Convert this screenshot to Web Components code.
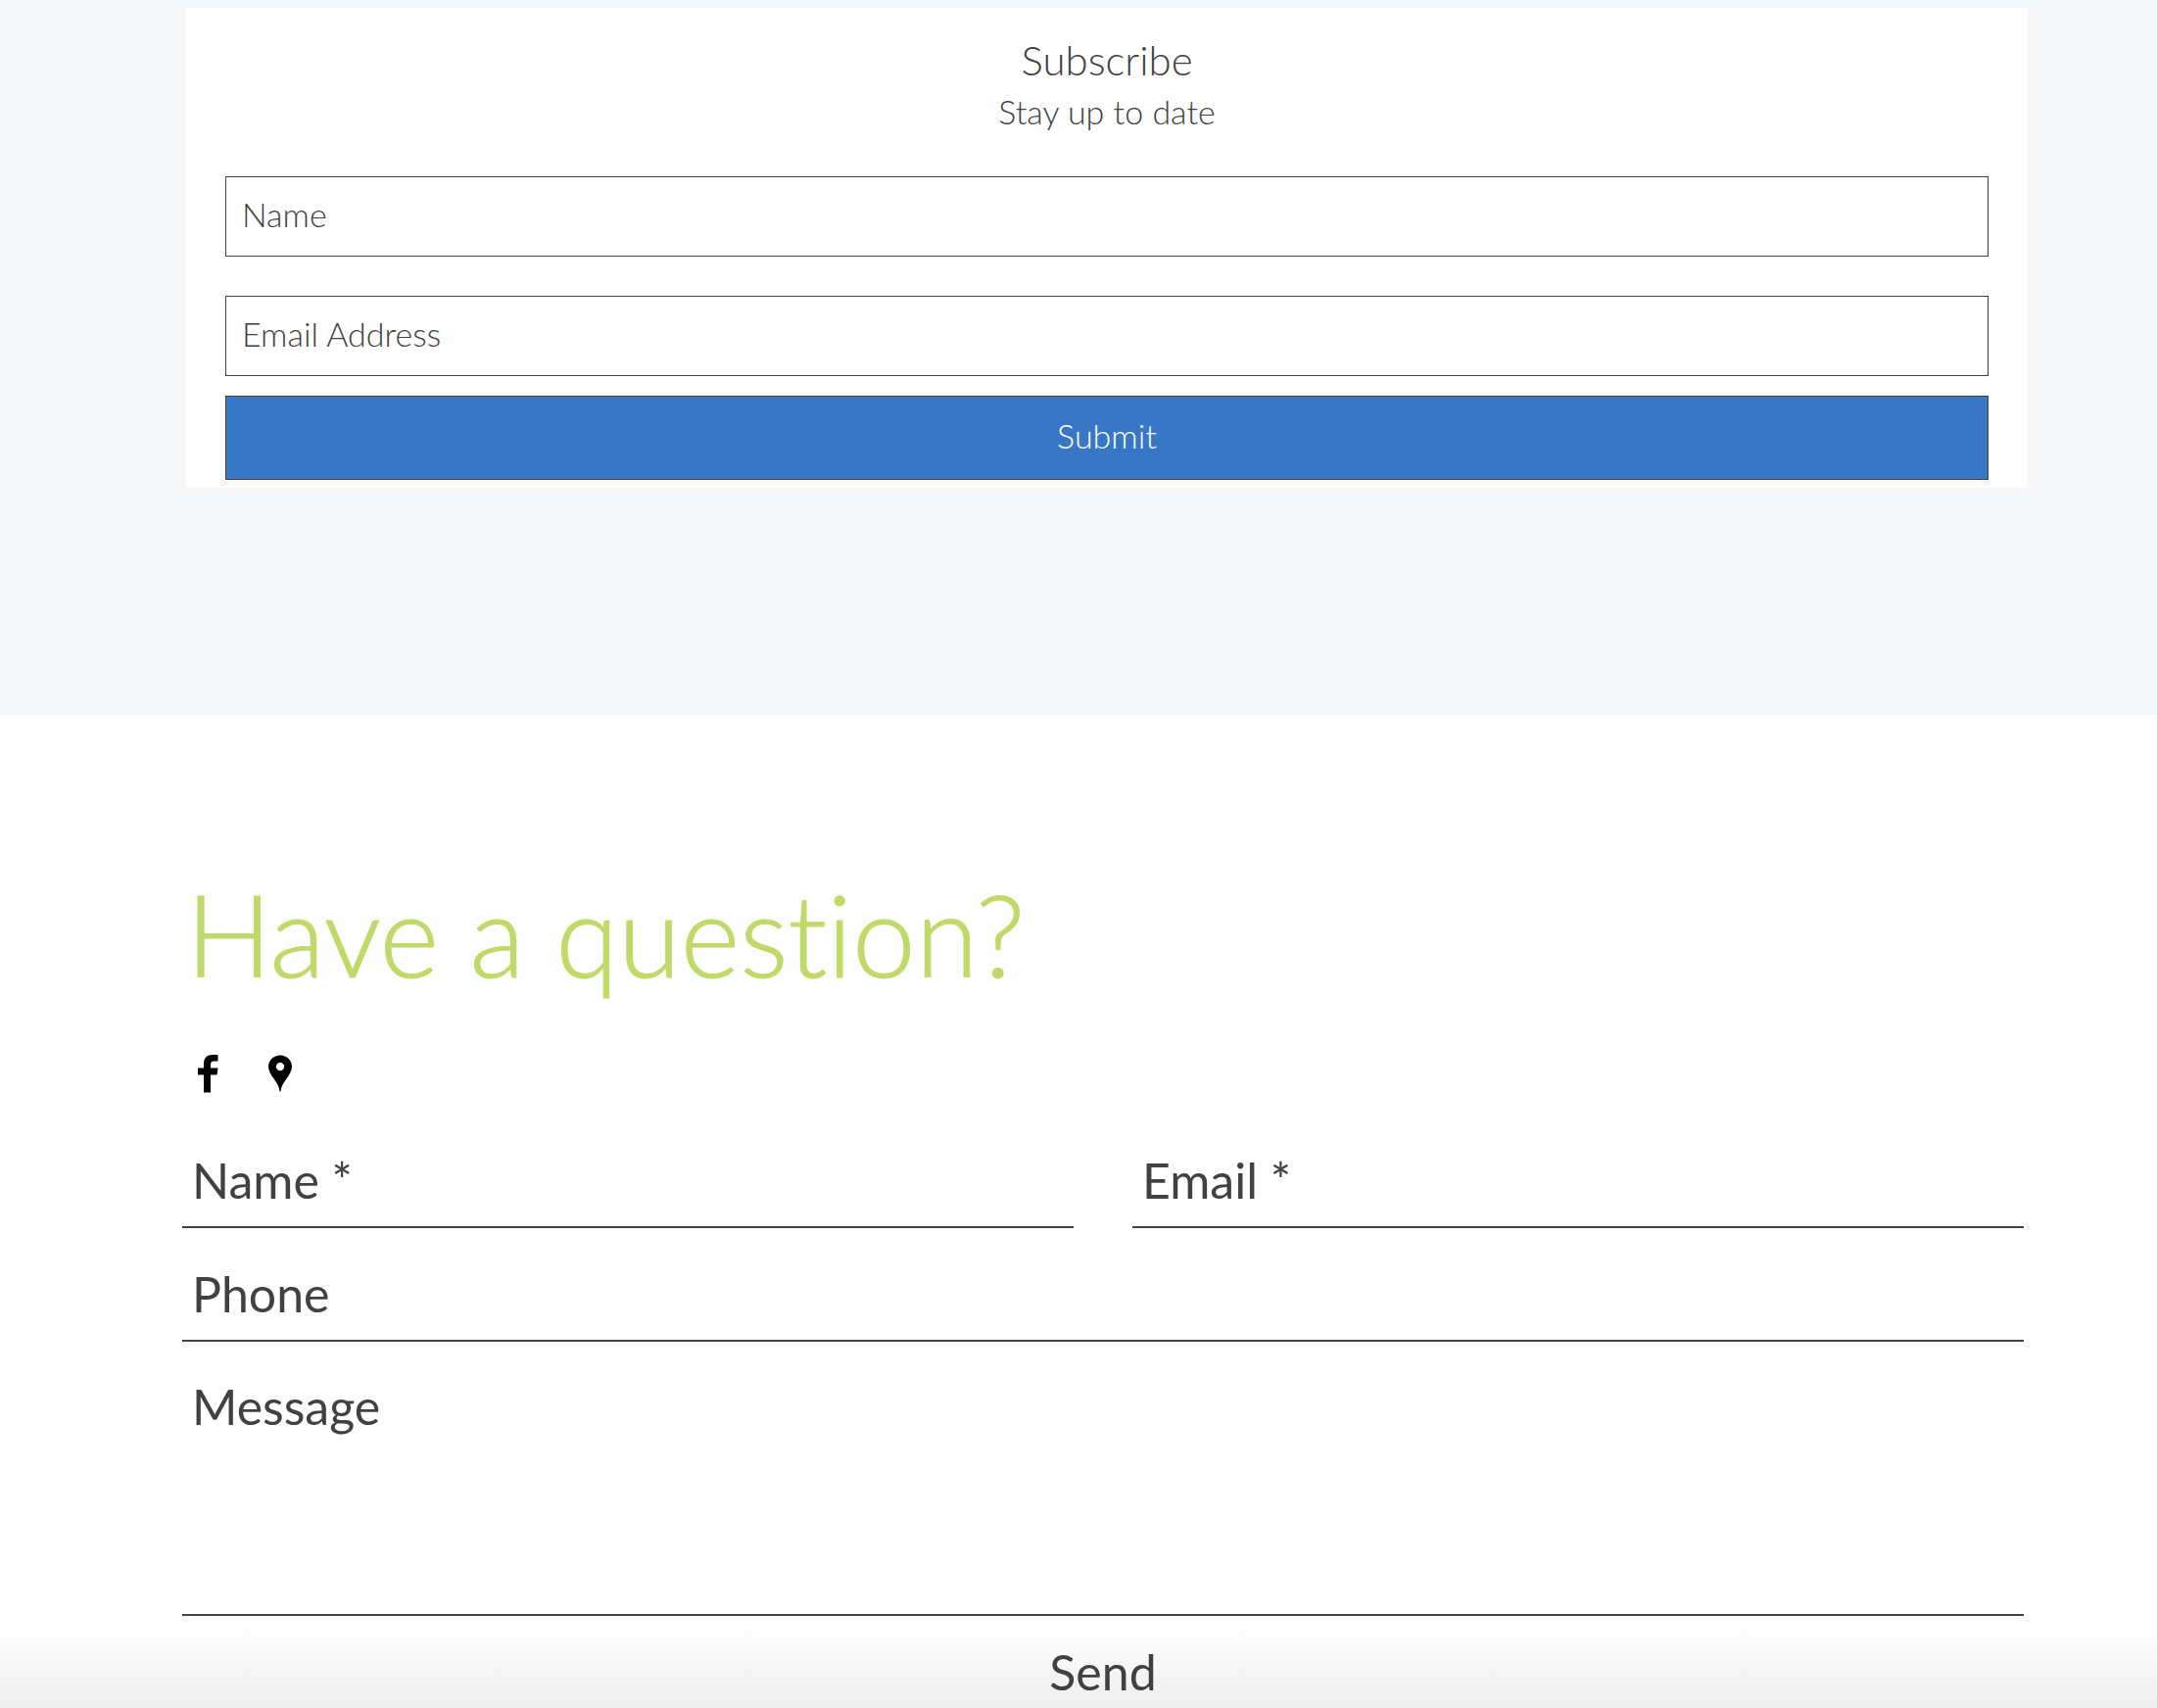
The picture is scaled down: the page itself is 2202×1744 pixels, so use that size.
<!DOCTYPE html>
<html lang="en">
<head>
<meta charset="utf-8">
<title>Subscribe and contact</title>
<style>
  html, body { margin: 0; min-height: 100%; }
  html { background: #fefefe; }
  body {
    --ink: #414141;
    --small: 34px;
    --medium: 42px;
    --large: 50px;
    --display: 116px;
    display: flex;
    flex-direction: column;
    min-height: 100vh;
    color: var(--ink);
    font-family: Lato, "Open Sans", sans-serif;
    font-weight: 300;
    font-variant-ligatures: none;
  }
</style>
</head>
<body>
<page-band>
  <subscribe-card>
    <span slot="title">Subscribe</span>
    <span slot="tagline">Stay up to date</span>
    <boxed-field label="Name" type="text"></boxed-field>
    <boxed-field label="Email Address" type="email"></boxed-field>
  </subscribe-card>
</page-band>
<contact-section>
  <span slot="title">Have a question?</span>
  <social-link slot="social" label="Facebook" href="#facebook">
    <svg width="24" height="40" viewBox="0 0 24 40"><path d="M6 39.500V21.500H0v-7h6V10.500C6 4 9.500 1 15 1h5.500v6.500H17c-3 0-4 1-4 3.500v3.500h7.500l-1 7H13v18z"/></svg>
  </social-link>
  <social-link slot="social" label="Location" href="#location">
    <svg width="24" height="40" viewBox="0 0 24 40"><path fill-rule="evenodd" d="M12 1.500C5.400 1.500 0 6.500 0 13c0 4.500 2.600 8.300 5.600 12.500C9 30.500 11 33.500 11.500 38.500h1C13 33.500 15 30.500 18.400 25.500 21.400 21.300 24 17.500 24 13 24 6.500 18.600 1.500 12 1.500zm0 7.400a4.200 4.200 0 1 1 0 8.400 4.200 4.200 0 0 1 0-8.400z"/></svg>
  </social-link>
  <line-field label="Name *" type="text"></line-field>
  <line-field label="Email *" type="email"></line-field>
  <line-field class="wide" label="Phone" type="tel"></line-field>
  <line-field class="wide" label="Message" type="multiline"></line-field>
</contact-section>

<script>
  class PageBand extends HTMLElement {
    constructor() {
      super();
      this.attachShadow({ mode: "open" }).innerHTML = `
        <style>
          :host { display: block; background: #f4f6f8; padding: 8px 132px 232px 190px; }
        </style>
        <slot></slot>`;
    }
  }

  class SubscribeCard extends HTMLElement {
    constructor() {
      super();
      this.attachShadow({ mode: "open" }).innerHTML = `
        <style>
          :host { display: block; background: #fefefe; padding: 26px 40px 8px; }
          header { text-align: center; margin-bottom: 40px; }
          h2, p { margin: 0; font-weight: inherit; }
          h2 { font-size: var(--medium); line-height: 54px; }
          p { font-size: var(--small); line-height: 52px; }
          form { display: flex; flex-direction: column; gap: 20px; }
          .fields { display: flex; flex-direction: column; gap: 40px; }
          button {
            box-sizing: border-box; height: 86px; padding: 0 0 6px; cursor: pointer;
            border: 1px solid var(--ink); border-radius: 0; background: #3876c6;
            color: #fff; font: inherit; font-size: var(--small);
          }
        </style>
        <header>
          <h2><slot name="title"></slot></h2>
          <p><slot name="tagline"></slot></p>
        </header>
        <form>
          <div class="fields"><slot></slot></div>
          <button type="button">Submit</button>
        </form>`;
    }
  }

  class BoxedField extends HTMLElement {
    connectedCallback() {
      const label = this.getAttribute("label");
      this.attachShadow({ mode: "open" }).innerHTML = `
        <style>
          :host { display: block; }
          input {
            display: block; box-sizing: border-box; width: 100%; height: 82px;
            padding: 0 16px 6px; border: 1px solid var(--ink); border-radius: 0;
            background: transparent; color: inherit; font: inherit; font-size: var(--small);
          }
          input::placeholder { color: var(--ink); opacity: 1; }
        </style>
        <input type="${this.getAttribute("type")}" aria-label="${label}" placeholder="${label}">`;
    }
  }

  class SocialLink extends HTMLElement {
    connectedCallback() {
      this.attachShadow({ mode: "open" }).innerHTML = `
        <style>
          :host { display: block; }
          a { display: flex; color: #000; }
          ::slotted(svg) { display: block; fill: currentColor; color: #000; }
        </style>
        <a href="${this.getAttribute("href")}" aria-label="${this.getAttribute("label")}"><slot></slot></a>`;
    }
  }

  class LineField extends HTMLElement {
    connectedCallback() {
      const label = this.getAttribute("label");
      const type = this.getAttribute("type");
      const control = type === "multiline"
        ? `<textarea aria-label="${label}" placeholder="${label}"></textarea>`
        : `<input type="${type}" aria-label="${label}" placeholder="${label}">`;
      this.attachShadow({ mode: "open" }).innerHTML = `
        <style>
          :host { display: block; }
          input, textarea {
            display: block; box-sizing: border-box; width: 100%; height: 96px;
            padding: 0 10px; border: 0; border-bottom: 2px solid var(--ink); border-radius: 0;
            background: transparent; color: inherit; font: inherit;
            font-size: var(--large); font-weight: 400; line-height: 60px;
          }
          textarea { height: 260px; padding-top: 16px; resize: none; }
          ::placeholder { color: var(--ink); opacity: 1; }
        </style>
        ${control}`;
    }
  }

  class ContactSection extends HTMLElement {
    constructor() {
      super();
      this.attachShadow({ mode: "open" }).innerHTML = `
        <style>
          :host {
            display: block; flex: 1; padding: 152px 136px 0 186px;
            background: linear-gradient(#fefefe, #fcfcfc 30%, #ededed) bottom / 100% 94px no-repeat #fefefe;
          }
          h1 {
            margin: 0; padding-left: 4px; color: #c0d968; font-size: var(--display); font-weight: inherit;
            line-height: 144px; -webkit-text-stroke: 1px currentColor;
          }
          nav { display: flex; gap: 48px; padding: 50px 16px 42px; }
          form { display: grid; grid-template-columns: 1fr 1fr; gap: 20px 60px; }
          ::slotted(.wide) { grid-column: 1 / -1; }
          button {
            display: block; width: 100%; height: 94px; padding: 20px 0 0; border: 0; cursor: pointer;
            background: transparent; color: inherit; font: inherit; font-size: var(--large);
            font-weight: 400; line-height: 60px;
          }
        </style>
        <h1><slot name="title"></slot></h1>
        <nav aria-label="Social"><slot name="social"></slot></nav>
        <form><slot></slot></form>
        <button type="button">Send</button>`;
    }
  }

  customElements.define("page-band", PageBand);
  customElements.define("subscribe-card", SubscribeCard);
  customElements.define("boxed-field", BoxedField);
  customElements.define("social-link", SocialLink);
  customElements.define("line-field", LineField);
  customElements.define("contact-section", ContactSection);
</script>
</body>
</html>
